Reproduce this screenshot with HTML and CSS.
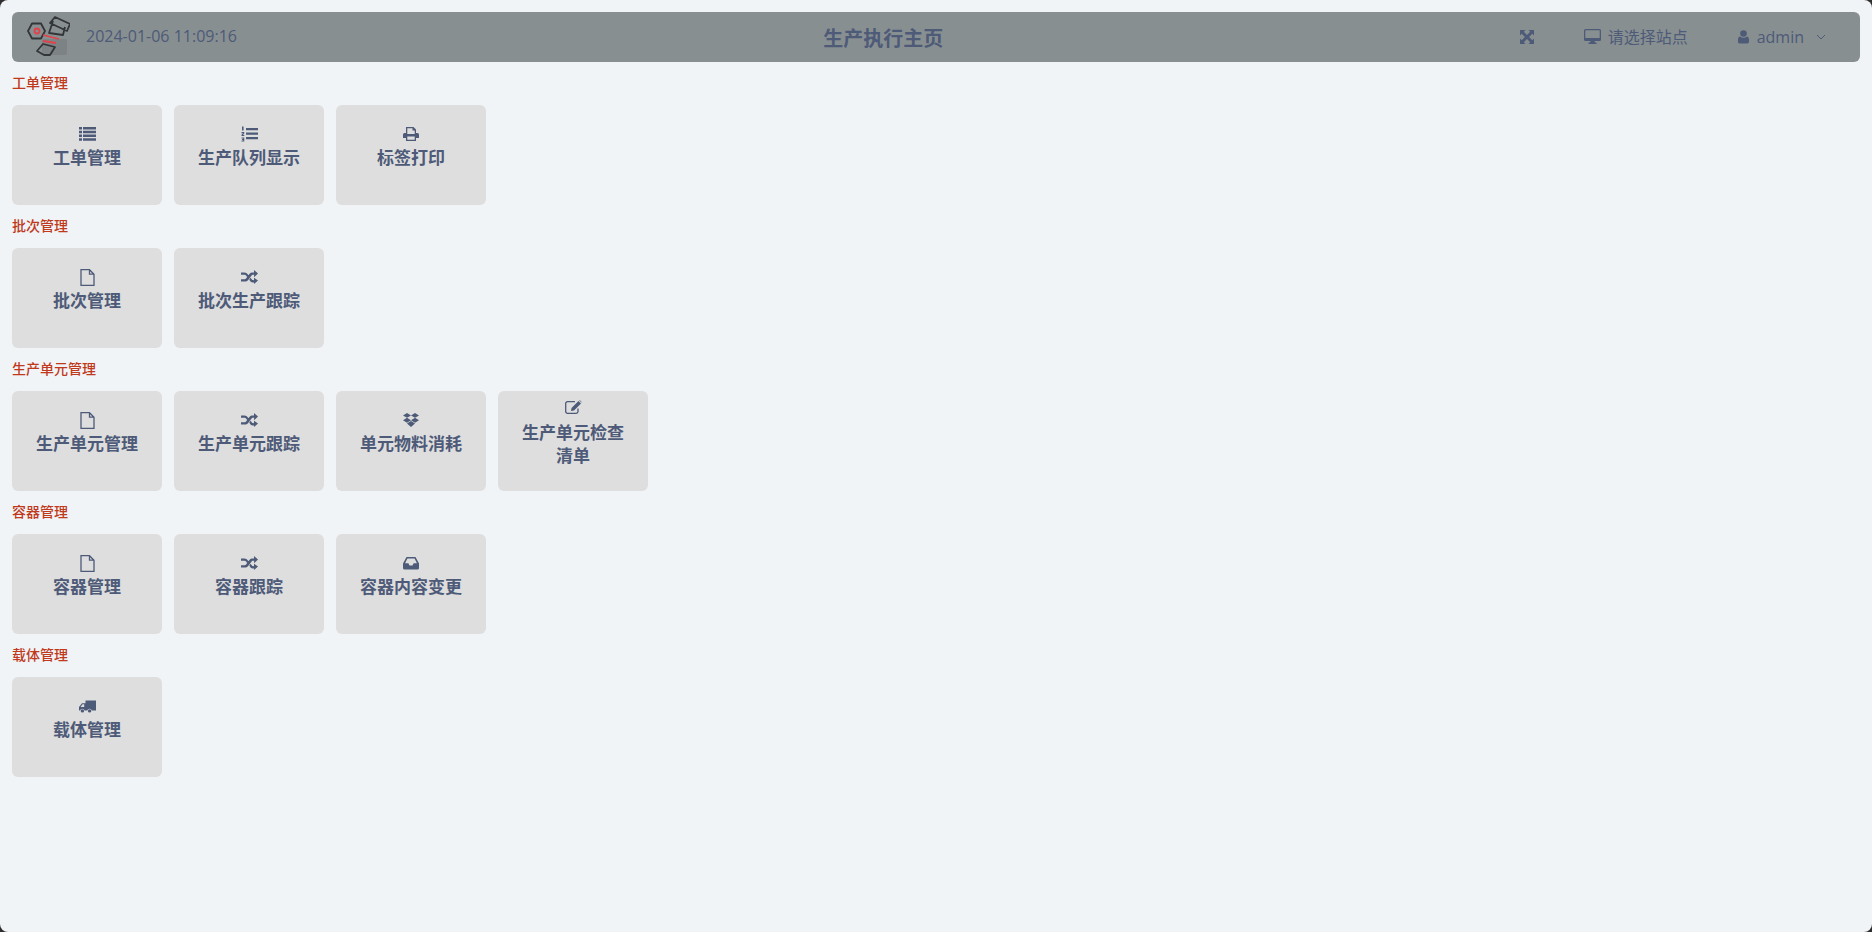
FILE: index.html
```html
<!DOCTYPE html>
<html lang="zh-CN">
<head>
    <meta charset="UTF-8">
    <title>生产执行主页</title>
    <link rel="stylesheet" href="styles.css">
</head>
<body>
    <header class="topbar">
        <div class="topbar-left">
            <svg class="logo" viewBox="0 0 44 44" width="44" height="44">
                <rect class="logo-shade" x="16" y="24" width="25" height="16" rx="2"/>
                <path class="logo-line" d="M2 16 6 8.500H15L19 16 15 23.500H6Z"/>
                <circle class="logo-red" cx="11" cy="16" r="2.500"/>
                <path class="logo-line" d="M29 2 44 9 41 16 24 8ZM27 6 23 18 37 20 39 12"/>
                <path class="logo-red" d="M17 20 33 24M17 26 30 28"/>
                <path class="logo-line" d="M11 36 17 29 29 32 24 40 18 40Z"/>
            </svg>
            <span class="clock">2024-01-06 11:09:16</span>
        </div>
        <div class="topbar-title">生产执行主页</div>
        <div class="topbar-right">
            <svg class="fa" width="14" height="14" viewBox="0 0 14 14"><path d="M0 0h5.500L3.800 1.700 7 4.900 10.200 1.700 8.500 0H14V5.500L12.300 3.800 9.100 7 12.300 10.200 14 8.500V14H8.500L10.200 12.300 7 9.100 3.800 12.300 5.500 14H0V8.500L1.700 10.200 4.900 7 1.700 3.800 0 5.500Z"/></svg>
            <span class="site">
                <svg class="fa" width="17" height="15" viewBox="0 0 17 15"><path fill-rule="evenodd" d="M1.500 0h14A1.500 1.500 0 0 1 17 1.500v9A1.500 1.500 0 0 1 15.500 12h-5l.5 1.500h1.500V15h-8v-1.500H6L6.500 12h-5A1.500 1.500 0 0 1 0 10.500V1.500A1.500 1.500 0 0 1 1.500 0ZM1.300 1.300V9h14.400V1.300Z"/></svg>
                请选择站点
            </span>
            <span class="user">
                <svg class="fa" width="11" height="14" viewBox="0 0 11 14"><circle cx="5.500" cy="3.500" r="3.300"/><path d="M2 6.500c1 .8 2.200 1.200 3.500 1.200S8 7.300 9 6.500c1.300.2 2 1.500 2 3.500v1.800c0 1-.7 1.700-1.700 1.700H1.700C.7 13.500 0 12.800 0 11.800V10c0-2 .7-3.300 2-3.500Z"/></svg>
                admin
                <svg class="caret" width="10" height="6" viewBox="0 0 10 6"><path d="M1 1l4 4 4-4"/></svg>
            </span>
        </div>
    </header>

    <main>
        <h2 class="group-title">工单管理</h2>
        <div class="card-row">
            <a class="card">
                <i class="icon"><svg class="fa" width="17" height="14" viewBox="0 0 17 14"><path d="M0 0h3v2.600H0ZM4 0h13v2.600H4ZM0 3.700h3v2.600H0ZM4 3.700h13v2.600H4ZM0 7.500h3v2.600H0ZM4 7.500h13v2.600H4ZM0 11.200h3v2.600H0ZM4 11.200h13v2.600H4Z"/></svg></i>
                <span>工单管理</span>
            </a>
            <a class="card">
                <i class="icon"><svg class="fa" width="17" height="16" viewBox="0 0 17 16"><path d="M5 2h12v2.200H5ZM5 6.500h12v2.200H5ZM5 11h12v2.200H5ZM1 .5h1.600v4H1ZM.5 6h2.800v1.200L1.800 8.800h1.500V10H.5V8.800L2 7.200H.5ZM.5 11.500h2.800v4H.5v-1h1.700v-.5H1v-1h1.200v-.5H.5Z"/></svg></i>
                <span>生产队列显示</span>
            </a>
            <a class="card">
                <i class="icon"><svg class="fa" width="16" height="14" viewBox="0 0 16 14"><path fill-rule="evenodd" d="M3 0h7.500L13 2.500V6h1.500A1.500 1.500 0 0 1 16 7.500V11h-3v3H3v-3H0V7.500A1.500 1.500 0 0 1 1.500 6H3ZM4.300 1.300V7h7.400V3.500H9.500V1.300ZM4.300 9.500v3.200h7.400V9.500Z"/></svg></i>
                <span>标签打印</span>
            </a>
        </div>

        <h2 class="group-title">批次管理</h2>
        <div class="card-row">
            <a class="card">
                <i class="icon"><svg class="outline" width="15" height="17" viewBox="0 0 15 17"><path d="M1 .7h8.500L14 5.200V16.300H1ZM9.500.7v4.500H14"/></svg></i>
                <span>批次管理</span>
            </a>
            <a class="card">
                <i class="icon"><svg class="fa" width="17" height="14" viewBox="0 0 17 14"><path d="M0 2.500h3.500c1.500 0 2.500.8 3.400 2L8 6 6.800 7.700 5.400 6C4.800 5.200 4.300 4.800 3.500 4.800H0ZM0 9.200h3.500c.8 0 1.300-.4 1.900-1.200l3-4c1-1.300 2-1.500 3.600-1.500h1V0L17 3.600l-3.900 3.600V4.800h-1c-.8 0-1.300.3-1.900 1.200l-3 4c-1 1.300-2 1.500-3.700 1.500H0ZM8.300 9.400 9.500 7.800 10.500 9c.6.800 1 1.200 2.500 1.200V7.800L17 10.400 13.100 14v-1.500c-2 0-3.200-.5-4-1.600Z"/></svg></i>
                <span>批次生产跟踪</span>
            </a>
        </div>

        <h2 class="group-title">生产单元管理</h2>
        <div class="card-row">
            <a class="card">
                <i class="icon"><svg class="outline" width="15" height="17" viewBox="0 0 15 17"><path d="M1 .7h8.500L14 5.200V16.300H1ZM9.500.7v4.500H14"/></svg></i>
                <span>生产单元管理</span>
            </a>
            <a class="card">
                <i class="icon"><svg class="fa" width="17" height="14" viewBox="0 0 17 14"><path d="M0 2.500h3.500c1.500 0 2.500.8 3.400 2L8 6 6.800 7.700 5.400 6C4.800 5.200 4.300 4.800 3.500 4.800H0ZM0 9.200h3.500c.8 0 1.300-.4 1.900-1.200l3-4c1-1.300 2-1.500 3.600-1.500h1V0L17 3.600l-3.900 3.600V4.800h-1c-.8 0-1.300.3-1.900 1.200l-3 4c-1 1.300-2 1.500-3.700 1.500H0ZM8.300 9.400 9.500 7.800 10.500 9c.6.800 1 1.200 2.500 1.200V7.800L17 10.400 13.100 14v-1.500c-2 0-3.200-.5-4-1.600Z"/></svg></i>
                <span>生产单元跟踪</span>
            </a>
            <a class="card">
                <i class="icon"><svg class="fa" width="16" height="14" viewBox="0 0 16 15" preserveAspectRatio="none"><path d="M4 0 8 2.600 4 5.200 0 2.600ZM12 0 16 2.600 12 5.200 8 2.600ZM0 7.800 4 5.200 8 7.800 4 10.400ZM8 7.800 12 5.200 16 7.800 12 10.400ZM4 11.300 8 8.700 12 11.300 8 15Z"/></svg></i>
                <span>单元物料消耗</span>
            </a>
            <a class="card">
                <i class="icon"><svg class="fa pen" width="17" height="14" viewBox="0 0 17 14"><path class="pen-box" d="M13 8.500v3A1.800 1.800 0 0 1 11.200 13.300H2.500A1.800 1.800 0 0 1 .7 11.500V3.500A1.800 1.800 0 0 1 2.500 1.700H10"/><path d="M13.500 1 16 3.500 9 10.500 6 11 6.500 8ZM14.200.3l.5-.3 2 2-.2.600Z"/></svg></i>
                <span>生产单元检查清单</span>
            </a>
        </div>

        <h2 class="group-title">容器管理</h2>
        <div class="card-row">
            <a class="card">
                <i class="icon"><svg class="outline" width="15" height="17" viewBox="0 0 15 17"><path d="M1 .7h8.500L14 5.200V16.300H1ZM9.500.7v4.500H14"/></svg></i>
                <span>容器管理</span>
            </a>
            <a class="card">
                <i class="icon"><svg class="fa" width="17" height="14" viewBox="0 0 17 14"><path d="M0 2.500h3.500c1.500 0 2.500.8 3.400 2L8 6 6.800 7.700 5.400 6C4.800 5.200 4.300 4.800 3.500 4.800H0ZM0 9.200h3.500c.8 0 1.300-.4 1.900-1.200l3-4c1-1.300 2-1.500 3.600-1.500h1V0L17 3.600l-3.900 3.600V4.800h-1c-.8 0-1.300.3-1.900 1.200l-3 4c-1 1.300-2 1.500-3.700 1.500H0ZM8.300 9.400 9.500 7.800 10.500 9c.6.800 1 1.200 2.500 1.200V7.800L17 10.400 13.100 14v-1.500c-2 0-3.200-.5-4-1.600Z"/></svg></i>
                <span>容器跟踪</span>
            </a>
            <a class="card">
                <i class="icon"><svg class="fa" width="16" height="13" viewBox="0 0 16 13"><path fill-rule="evenodd" d="M3.500 0h9L16 6.500V11a1.500 1.500 0 0 1-1.500 1.500H1.500A1.500 1.500 0 0 1 0 11V6.500ZM4.400 1.400 2.100 6.300h3.300L6.500 8.500h3l1.100-2.200h3.300L11.600 1.400Z"/></svg></i>
                <span>容器内容变更</span>
            </a>
        </div>

        <h2 class="group-title">载体管理</h2>
        <div class="card-row">
            <a class="card">
                <i class="icon"><svg class="fa" width="17" height="14" viewBox="0 0 17 14"><path fill-rule="evenodd" d="M6.500 1.500H17V11.500H12.800a2.300 2.300 0 0 0-4.500 0H5.600a2.300 2.300 0 0 0-4.500 0H0V8L3 4.200H6.500ZM5.200 5.200H3.600L1.500 8H5.200ZM3.400 10.200a1.700 1.700 0 1 1 0 3.400 1.700 1.700 0 0 1 0-3.400ZM10.600 10.200a1.700 1.700 0 1 1 0 3.400 1.700 1.700 0 0 1 0-3.400Z"/></svg></i>
                <span>载体管理</span>
            </a>
        </div>
    </main>
</body>
</html>
```

FILE: styles.css
```css
* {
    box-sizing: border-box;
    margin: 0;
    padding: 0;
}
html, body {
    height: 100%;
}
html {
    background-color: #2e2e2e;
}
body {
    font-family: "Open Sans", "Noto Sans CJK SC", sans-serif;
    background-color: #f0f4f7;
    color: #4d5a78;
    padding: 12px;
    border-radius: 8px;
    overflow: hidden;
}
.topbar {
    display: flex;
    justify-content: space-between;
    align-items: center;
    height: 50px;
    background-color: #888f91;
    border-radius: 6px;
    padding: 0 34px 0 14px;
}
.topbar-left {
    display: flex;
    align-items: center;
}
.logo {
    margin-right: 16px;
}
.logo-shade {
    fill: #7d8285;
}
.logo-line {
    fill: none;
    stroke: #333639;
    stroke-width: 1.800;
    stroke-linejoin: round;
}
.logo-red {
    fill: none;
    stroke: #e2424a;
    stroke-width: 1.800;
}
.clock {
    font-size: 16px;
    margin-bottom: 2px;
}
.topbar-title {
    font-size: 20px;
    font-weight: 700;
    margin-left: 10px;
}
.topbar-right {
    display: flex;
    align-items: center;
    font-size: 16px;
}
.site {
    display: flex;
    align-items: center;
    gap: 7px;
    margin: 0 0 2px 50px;
}
.user {
    display: flex;
    align-items: center;
    gap: 8px;
    margin-left: 50px;
}
.fa {
    fill: #4d5a78;
    flex: none;
}
.caret {
    fill: none;
    stroke: #4d5a78;
    stroke-width: 1;
    margin-left: 4px;
}
.group-title {
    font-size: 14px;
    font-weight: 500;
    line-height: 20px;
    color: #c0391b;
    margin: 11px 0 12px;
}
.card-row {
    display: flex;
    gap: 12px;
}
.card {
    display: flex;
    flex-direction: column;
    align-items: center;
    justify-content: center;
    gap: 4px;
    width: 150px;
    height: 100px;
    padding: 0 20px 15px;
    background-color: #dfdede;
    border-radius: 6px;
    font-size: 17px;
    font-weight: 700;
    line-height: 23px;
    text-align: center;
}
.icon {
    display: flex;
    align-items: center;
    justify-content: center;
    height: 16px;
}
.outline {
    fill: none;
    stroke: #4d5a78;
    stroke-width: 1.300;
    flex: none;
}
.pen {
    margin-bottom: 4px;
}
.pen-box {
    fill: none;
    stroke: #4d5a78;
    stroke-width: 1.300;
}
```
